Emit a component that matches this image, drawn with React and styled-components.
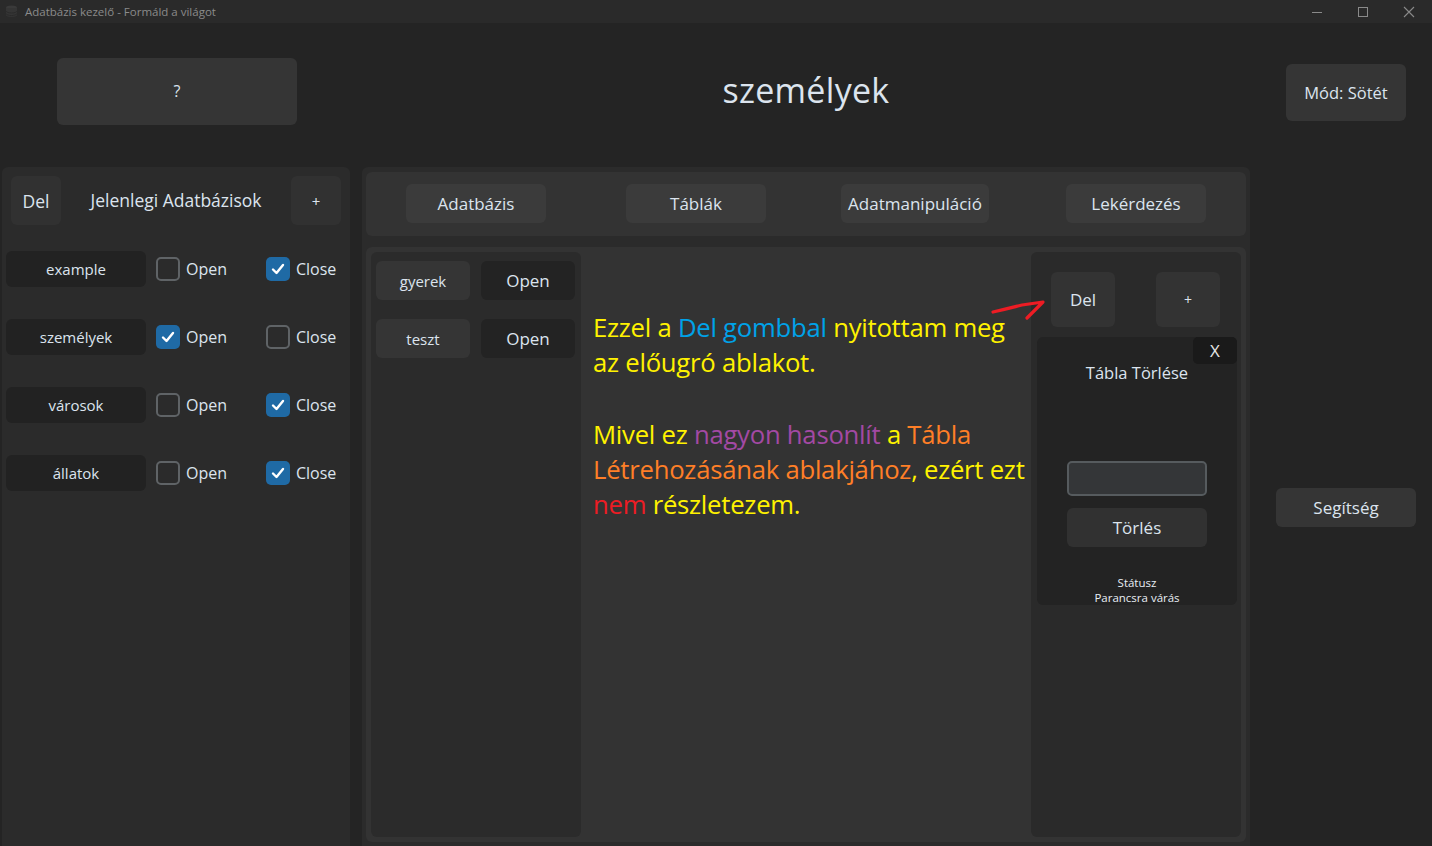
import React from "react";
import styled, { createGlobalStyle } from "styled-components";

const Global = createGlobalStyle`
  html, body { margin: 0; padding: 0; background: #242424; overflow: hidden; }
  body { font-family: "Open Sans", "Noto Sans", sans-serif; color: #dce4ee; }
  * { box-sizing: border-box; }
`;

const Window = styled.div`
  width: 1432px;
  height: 846px;
  display: flex;
  flex-direction: column;
  background: #242424;
  overflow: hidden;
`;

const TitleBar = styled.div`
  height: 23px;
  flex: none;
  background: #2a2a2a;
  display: flex;
  align-items: center;
  padding-left: 5px;
`;

const TitleText = styled.span`
  margin-left: 7px;
  font-size: 11.5px;
  color: #8b8b8b;
  font-family: "Open Sans", sans-serif;
`;

const WinControls = styled.div`
  margin-left: auto;
  display: flex;
  height: 100%;
`;

const WinBtn = styled.div`
  width: 46px;
  height: 100%;
  display: flex;
  align-items: center;
  justify-content: center;
`;

const Body = styled.div`
  flex: 1;
  display: grid;
  grid-template-columns: 348px 888px 1fr;
  grid-template-rows: 144px 1fr;
  column-gap: 12px;
  padding-left: 2px;
  min-height: 0;
`;

const HeaderCell = styled.div`
  display: flex;
  align-items: center;
  justify-content: ${p => p.$justify || "center"};
  padding-bottom: ${p => p.$pb || 0}px;
`;

const Btn = styled.div`
  display: flex;
  align-items: center;
  justify-content: center;
  width: ${p => p.$w}px;
  height: ${p => p.$h}px;
  background: ${p => p.$bg || "#353535"};
  border-radius: 6px;
  font-size: ${p => p.$fs || 17}px;
  color: #dce4ee;
  flex: none;
`;

const HelpBtn = styled(Btn)`
  margin-left: 2px;
`;

const ModeBtn = styled(Btn)`
  margin-left: 24px;
  margin-top: 2px;
`;

const PageTitle = styled.h1`
  margin: 0;
  font-size: 34px;
  font-weight: 500;
  color: #dce4ee;
  letter-spacing: 0.3px;
`;

const LeftPanel = styled.div`
  background: #2b2b2b;
  border-radius: 6px 6px 0 0;
  padding: 9px 9px 0 4px;
  display: flex;
  flex-direction: column;
`;

const PanelHead = styled.div`
  display: flex;
  align-items: center;
  justify-content: space-between;
  padding-left: 5px;
  margin-bottom: 26px;
`;

const HeadLabel = styled.span`
  font-size: 17.5px;
  margin-top: -2px;
`;

const DbList = styled.div`
  display: flex;
  flex-direction: column;
  gap: 32px;
`;

const DbRow = styled.div`
  display: flex;
  align-items: center;
  height: 36px;
`;

const Check = styled.label`
  display: flex;
  align-items: center;
  gap: 6px;
  font-size: 16px;
  flex: none;
  width: ${p => p.$w}px;
  margin-left: ${p => p.$ml || 0}px;
  margin-top: -1px;
`;

const Box = styled.span`
  width: 24px;
  height: 24px;
  border-radius: 5px;
  flex: none;
  display: flex;
  align-items: center;
  justify-content: center;
  background: ${p => (p.$on ? "#1f6aa5" : "transparent")};
  border: ${p => (p.$on ? "none" : "2px solid #5f6366")};
`;

const MidPanel = styled.div`
  background: #2b2b2b;
  border-radius: 6px 6px 0 0;
  padding: 5px 4px 4px 4px;
  display: flex;
  flex-direction: column;
  gap: 11px;
  min-height: 0;
`;

const TabBar = styled.div`
  height: 64px;
  background: #333333;
  border-radius: 6px;
  display: flex;
  align-items: center;
  padding-left: 40px;
  padding-bottom: 2px;
`;

const Tab = styled(Btn)`
  margin-right: ${p => p.$mr}px;
  background: #3b3b3b;
`;

const Content = styled.div`
  position: relative;
  flex: 1;
  background: #333333;
  border-radius: 6px;
  padding: 5px;
  display: flex;
  min-height: 0;
`;

const TableList = styled.div`
  width: 210px;
  background: #2b2b2b;
  border-radius: 6px;
  padding: 9px 5px;
  display: flex;
  flex-direction: column;
  gap: 19px;
`;

const TableRow = styled.div`
  display: flex;
  gap: 11px;
`;

const Note = styled.div`
  flex: 1;
  padding: 58px 0 0 12px;
  font-family: "Open Sans", sans-serif;
  font-size: 25.7px;
  line-height: 35px;
  color: #fff200;
  letter-spacing: -0.25px;
  white-space: nowrap;
`;

const Para = styled.p`
  margin: 0 0 37px 0;
`;

const C = styled.span`
  color: ${p => p.$c};
`;

const Arrow = styled.svg`
  position: absolute;
  left: 620px;
  top: 45px;
  overflow: visible;
`;

const SidePanel = styled.div`
  width: 210px;
  background: #2a2a2a;
  border-radius: 6px;
  padding: 20px 4px 0 6px;
  display: flex;
  flex-direction: column;
`;

const SideBtns = styled.div`
  display: flex;
  justify-content: space-between;
  padding: 0 17px 0 14px;
  margin-bottom: 10px;
`;

const Popup = styled.div`
  position: relative;
  height: 268px;
  background: #232323;
  border-radius: 6px;
  display: flex;
  flex-direction: column;
  align-items: center;
  padding-top: 24px;
`;

const CloseX = styled.div`
  position: absolute;
  right: 0;
  top: 0;
  width: 44px;
  height: 27px;
  background: #1a1a1a;
  border-radius: 5px;
  display: flex;
  align-items: center;
  justify-content: center;
  font-size: 17px;
  color: #e6e6e6;
`;

const PopTitle = styled.div`
  font-size: 16.5px;
  margin-bottom: 77px;
`;

const Input = styled.div`
  width: 140px;
  height: 35px;
  background: #343638;
  border: 2px solid #565b5e;
  border-radius: 5px;
  margin-bottom: 12px;
`;

const Status = styled.div`
  margin-top: 28px;
  font-size: 11.5px;
  line-height: 15px;
  text-align: center;
  color: #e8eef5;
`;

const RightCol = styled.div`
  display: flex;
  flex-direction: column;
  padding: 321px 0 0 14px;
`;

const CheckIcon = () => (
  <svg width="16" height="16" viewBox="0 0 16 16">
    <path d="M3 8.5 L6.5 12 L13 4" fill="none" stroke="#fff" strokeWidth="2.4" strokeLinecap="round" strokeLinejoin="round" />
  </svg>
);

const CheckBox = ({ on, label, w, ml }) => (
  <Check $w={w} $ml={ml}>
    <Box $on={on}>{on && <CheckIcon />}</Box>
    {label}
  </Check>
);

const dbs = [
  { name: "example", open: false, close: true },
  { name: "személyek", open: true, close: false },
  { name: "városok", open: false, close: true },
  { name: "állatok", open: false, close: true },
];

export default function App() {
  return (
    <Window>
      <Global />
      <TitleBar>
        <svg width="13" height="13" viewBox="0 0 13 13">
          <ellipse cx="6.5" cy="2.5" rx="5.5" ry="2" fill="#3a3a3a" />
          <path d="M1 3v7c0 1.1 2.5 2 5.5 2s5.5-.9 5.5-2V3" fill="#353535" />
          <path d="M1 6c0 1.1 2.5 2 5.5 2s5.5-.9 5.5-2M1 8.5c0 1.1 2.5 2 5.5 2s5.5-.9 5.5-2" stroke="#2a2a2a" fill="none" />
        </svg>
        <TitleText>Adatbázis kezelő - Formáld a világot</TitleText>
        <WinControls>
          <WinBtn>
            <svg width="12" height="12" viewBox="0 0 12 12"><path d="M1 6.5h10" stroke="#8a8a8a" /></svg>
          </WinBtn>
          <WinBtn>
            <svg width="12" height="12" viewBox="0 0 12 12"><rect x="1.5" y="1.5" width="9" height="9" fill="none" stroke="#8a8a8a" /></svg>
          </WinBtn>
          <WinBtn>
            <svg width="12" height="12" viewBox="0 0 12 12"><path d="M1 1l10 10M11 1L1 11" stroke="#8a8a8a" strokeWidth="1.1" /></svg>
          </WinBtn>
        </WinControls>
      </TitleBar>
      <Body>
        <HeaderCell $pb={8}>
          <HelpBtn $w={240} $h={67} $fs={16}>?</HelpBtn>
        </HeaderCell>
        <HeaderCell $pb={10}>
          <PageTitle>személyek</PageTitle>
        </HeaderCell>
        <HeaderCell $pb={8} $justify="flex-start">
          <ModeBtn $w={120} $h={57} $fs={16.5}>Mód: Sötét</ModeBtn>
        </HeaderCell>

        <LeftPanel>
          <PanelHead>
            <Btn $w={50} $h={49} $fs={17.5} $bg="#313131">Del</Btn>
            <HeadLabel>Jelenlegi Adatbázisok</HeadLabel>
            <Btn $w={50} $h={49} $fs={15} $bg="#313131">+</Btn>
          </PanelHead>
          <DbList>
            {dbs.map(d => (
              <DbRow key={d.name}>
                <Btn $w={140} $h={36} $fs={15} $bg="#222222">{d.name}</Btn>
                <CheckBox on={d.open} label="Open" w={110} ml={10} />
                <CheckBox on={d.close} label="Close" w={70} />
              </DbRow>
            ))}
          </DbList>
        </LeftPanel>

        <MidPanel>
          <TabBar>
            <Tab $w={140} $h={39} $fs={17} $mr={80}>Adatbázis</Tab>
            <Tab $w={140} $h={39} $fs={17} $mr={75}>Táblák</Tab>
            <Tab $w={148} $h={39} $fs={17} $mr={77}>Adatmanipuláció</Tab>
            <Tab $w={140} $h={39} $fs={17} $mr={0}>Lekérdezés</Tab>
          </TabBar>
          <Content>
            <TableList>
              {["gyerek", "teszt"].map(t => (
                <TableRow key={t}>
                  <Btn $w={94} $h={39} $fs={15}>{t}</Btn>
                  <Btn $w={94} $h={39} $fs={17} $bg="#232323">Open</Btn>
                </TableRow>
              ))}
            </TableList>
            <Note>
              <Para>
                Ezzel a <C $c="#00a2e8">Del gombbal</C> nyitottam meg<br />
                az előugró ablakot.
              </Para>
              <Para>
                Mivel ez <C $c="#a349a4">nagyon hasonlít</C> a <C $c="#ff7f27">Tábla</C><br />
                <C $c="#ff7f27">Létrehozásának ablakjához</C>, ezért ezt<br />
                <C $c="#ed1c24">nem</C> részletezem.
              </Para>
            </Note>
            <Arrow width="70" height="35" viewBox="0 0 70 35">
              <path d="M7 20 Q20 17 36 13 L57 10 L41 26" fill="none" stroke="#ed1c24" strokeWidth="3.2" strokeLinecap="round" strokeLinejoin="round" />
            </Arrow>
            <SidePanel>
              <SideBtns>
                <Btn $w={64} $h={55} $fs={17} $bg="#333333">Del</Btn>
                <Btn $w={64} $h={55} $fs={14} $bg="#333333">+</Btn>
              </SideBtns>
              <Popup>
                <CloseX>X</CloseX>
                <PopTitle>Tábla Törlése</PopTitle>
                <Input />
                <Btn $w={140} $h={39} $fs={17} $bg="#313131">Törlés</Btn>
                <Status>
                  Státusz<br />Parancsra várás
                </Status>
              </Popup>
            </SidePanel>
          </Content>
        </MidPanel>

        <RightCol>
          <Btn $w={140} $h={39} $fs={17}>Segítség</Btn>
        </RightCol>
      </Body>
    </Window>
  );
}
